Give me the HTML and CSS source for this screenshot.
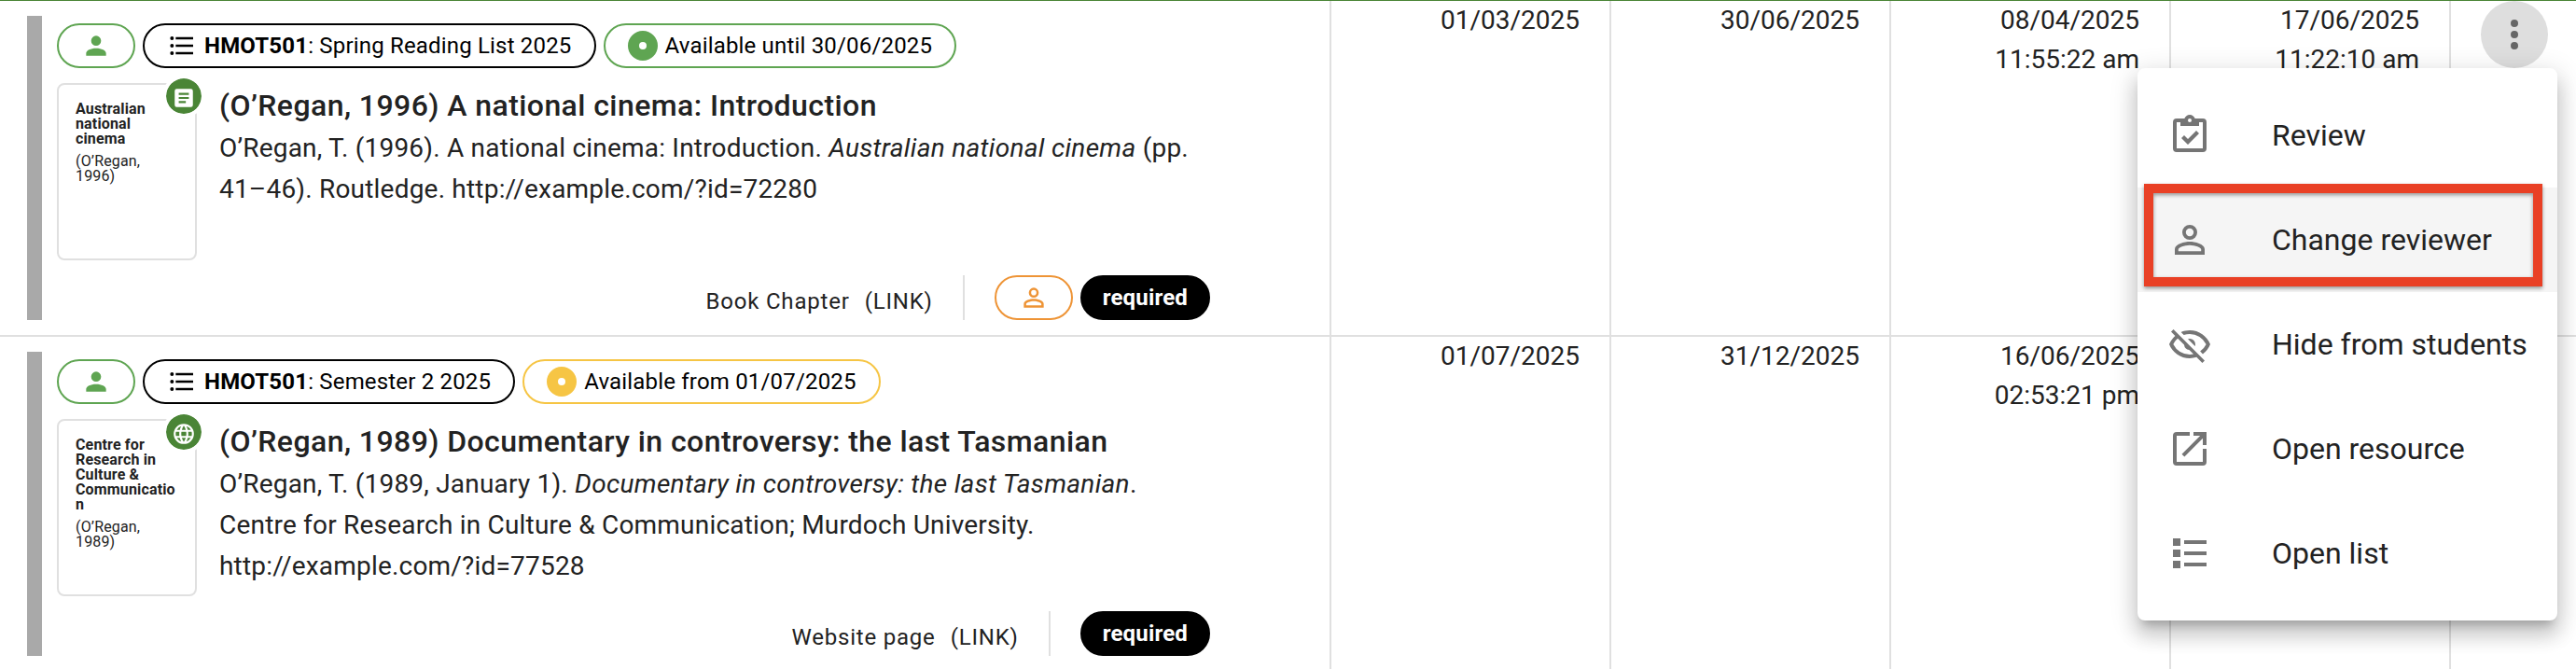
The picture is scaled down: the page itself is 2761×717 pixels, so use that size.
FILE: index.html
```html
<!DOCTYPE html>
<html lang="en">
  <head>
    <meta charset="UTF-8" />
    <meta name="viewport" content="width=device-width, initial-scale=1.0" />
    <title>Reading list items</title>
    <link rel="stylesheet" href="styles.css">
  </head>

  <body>
    <div class="table">
      <div class="row">
        <div class="cell item">
          <div class="item-bar"></div>
          <div class="item-body">
            <div class="chips">
              <span class="chip chip-green">
                <svg class="icon" viewBox="0 0 24 24"><path d="M12 4a4 4 0 1 1 0 8 4 4 0 0 1 0-8m0 10c4.420 0 8 1.790 8 4v2H4v-2c0-2.210 3.580-4 8-4" /></svg>
              </span>
              <span class="chip chip-black">
                <svg class="icon" viewBox="0 0 24 24"><path d="M7 5h14v2H7V5m0 8v-2h14v2H7M4 4.500a1.500 1.500 0 1 1 0 3 1.500 1.500 0 0 1 0-3m0 6a1.500 1.500 0 1 1 0 3 1.500 1.500 0 0 1 0-3M7 19v-2h14v2H7m-3-2.500a1.500 1.500 0 1 1 0 3 1.500 1.500 0 0 1 0-3" /></svg>
                <span><b>HMOT501</b>: Spring Reading List 2025</span>
              </span>
              <span class="chip chip-green">
                <span class="dot"></span>
                <span class="chip-text">Available until 30/06/2025</span>
              </span>
            </div>
            <div class="resource">
              <div class="cover">
                <div class="cover-title">Australian national cinema</div>
                <div class="cover-author">(O’Regan, 1996)</div>
                <div class="cover-badge">
                  <svg viewBox="0 0 24 24"><path d="M5 3h14a2 2 0 0 1 2 2v14a2 2 0 0 1-2 2H5a2 2 0 0 1-2-2V5a2 2 0 0 1 2-2m2 4v2h10V7H7m0 4v2h10v-2H7m0 4v2h7v-2H7" /></svg>
                </div>
              </div>
              <div class="details">
                <div class="title">(O’Regan, 1996) A national cinema: Introduction</div>
                <div class="citation">O’Regan, T. (1996). A national cinema: Introduction. <i>Australian national cinema</i> (pp. 41–46). Routledge. http://example.com/?id=72280</div>
              </div>
            </div>
            <div class="item-footer">
              <span class="type">Book Chapter</span>
              <span class="type">(LINK)</span>
              <span class="divider"></span>
              <span class="chip chip-orange">
                <svg class="icon" viewBox="0 0 24 24"><path d="M12 4a4 4 0 1 1 0 8 4 4 0 0 1 0-8m0 1.900a2.100 2.100 0 1 0 0 4.200 2.100 2.100 0 0 0 0-4.200m0 7.100c2.670 0 8 1.330 8 4v3H4v-3c0-2.670 5.330-4 8-4m0 1.900c-2.970 0-6.100 1.460-6.100 2.100v1.100h12.200V17c0-.640-3.130-2.100-6.100-2.100" /></svg>
              </span>
              <span class="chip chip-required">required</span>
            </div>
          </div>
        </div>
        <div class="cell date">01/03/2025</div>
        <div class="cell date">30/06/2025</div>
        <div class="cell date">08/04/2025<br>11:55:22 am</div>
        <div class="cell date">17/06/2025<br>11:22:10 am</div>
        <div class="cell actions">
          <button class="more-button">
            <svg viewBox="0 0 24 24"><path d="M12 16a2 2 0 1 1 0 4 2 2 0 0 1 0-4m0-6a2 2 0 1 1 0 4 2 2 0 0 1 0-4m0-6a2 2 0 1 1 0 4 2 2 0 0 1 0-4" /></svg>
          </button>
          <div class="menu">
            <div class="menu-item">
              <svg viewBox="0 0 24 24"><path d="M19 3h-4.180C14.400 1.840 13.300 1 12 1s-2.400.840-2.820 2H5a2 2 0 0 0-2 2v14a2 2 0 0 0 2 2h14a2 2 0 0 0 2-2V5a2 2 0 0 0-2-2m-7 0a1 1 0 1 1 0 2 1 1 0 0 1 0-2M7 7h10V5h2v14H5V5h2v2m.500 6.500L9 12l2 2 4.500-4.500L17 11l-6 6-3.500-3.500" /></svg>
              <span>Review</span>
            </div>
            <div class="menu-item active">
              <svg viewBox="0 0 24 24"><path d="M12 4a4 4 0 1 1 0 8 4 4 0 0 1 0-8m0 1.900a2.100 2.100 0 1 0 0 4.200 2.100 2.100 0 0 0 0-4.200m0 7.100c2.670 0 8 1.330 8 4v3H4v-3c0-2.670 5.330-4 8-4m0 1.900c-2.970 0-6.100 1.460-6.100 2.100v1.100h12.200V17c0-.640-3.130-2.100-6.100-2.100" /></svg>
              <span>Change reviewer</span>
              <div class="highlight"></div>
            </div>
            <div class="menu-item">
              <svg viewBox="0 0 24 24"><path d="M2 5.270 3.280 4 20 20.720 18.730 22l-3.080-3.080c-1.150.380-2.370.580-3.650.580-5 0-9.270-3.110-11-7.500.690-1.760 1.790-3.310 3.190-4.540L2 5.270M12 9a3 3 0 0 1 3 3 3 3 0 0 1-.170 1L11 9.170A3 3 0 0 1 12 9m0-4.500c5 0 9.270 3.110 11 7.500a11.790 11.790 0 0 1-4 5.190l-1.420-1.430A9.862 9.862 0 0 0 20.820 12 9.821 9.821 0 0 0 12 6.500c-1.090 0-2.160.180-3.160.500L7.300 5.470c1.440-.620 3.030-.970 4.700-.970M3.180 12A9.821 9.821 0 0 0 12 17.500c.690 0 1.370-.070 2-.210L11.720 15A3.064 3.064 0 0 1 9 12.280L5.600 8.870c-.990.850-1.820 1.910-2.420 3.130" /></svg>
              <span>Hide from students</span>
            </div>
            <div class="menu-item">
              <svg viewBox="0 0 24 24"><path d="M12 3v2H5v14h14v-7h2v7a2 2 0 0 1-2 2H5a2 2 0 0 1-2-2V5a2 2 0 0 1 2-2h7m2 0h7v7h-2V6.410l-9.830 9.830-1.410-1.410L17.590 5H14V3" /></svg>
              <span>Open resource</span>
            </div>
            <div class="menu-item">
              <svg viewBox="0 0 24 24"><path d="M3 4h4v4H3V4m6 1v2h12V5H9m-6 5h4v4H3v-4m6 1v2h12v-2H9m-6 5h4v4H3v-4m6 1v2h12v-2H9" /></svg>
              <span>Open list</span>
            </div>
          </div>
        </div>
      </div>

      <div class="row">
        <div class="cell item">
          <div class="item-bar"></div>
          <div class="item-body">
            <div class="chips">
              <span class="chip chip-green">
                <svg class="icon" viewBox="0 0 24 24"><path d="M12 4a4 4 0 1 1 0 8 4 4 0 0 1 0-8m0 10c4.420 0 8 1.790 8 4v2H4v-2c0-2.210 3.580-4 8-4" /></svg>
              </span>
              <span class="chip chip-black">
                <svg class="icon" viewBox="0 0 24 24"><path d="M7 5h14v2H7V5m0 8v-2h14v2H7M4 4.500a1.500 1.500 0 1 1 0 3 1.500 1.500 0 0 1 0-3m0 6a1.500 1.500 0 1 1 0 3 1.500 1.500 0 0 1 0-3M7 19v-2h14v2H7m-3-2.500a1.500 1.500 0 1 1 0 3 1.500 1.500 0 0 1 0-3" /></svg>
                <span><b>HMOT501</b>: Semester 2 2025</span>
              </span>
              <span class="chip chip-yellow">
                <span class="dot"></span>
                <span class="chip-text">Available from 01/07/2025</span>
              </span>
            </div>
            <div class="resource">
              <div class="cover">
                <div class="cover-title">Centre for Research in Culture &amp; Communication</div>
                <div class="cover-author">(O’Regan, 1989)</div>
                <div class="cover-badge">
                  <svg viewBox="0 0 24 24"><path d="M16.360 14c.080-.660.140-1.320.140-2s-.060-1.340-.140-2h3.380c.160.640.260 1.310.260 2s-.100 1.360-.260 2m-5.150 5.560c.600-1.110 1.060-2.310 1.380-3.560h2.950a8.030 8.030 0 0 1-4.330 3.560M14.340 14H9.660c-.100-.660-.160-1.320-.160-2s.060-1.350.160-2h4.680c.090.650.160 1.320.160 2s-.070 1.340-.160 2M12 19.960c-.830-1.200-1.500-2.530-1.910-3.960h3.820c-.410 1.430-1.080 2.760-1.910 3.960M8 8H5.080A7.923 7.923 0 0 1 9.400 4.440C8.800 5.550 8.350 6.750 8 8m-2.920 8H8c.350 1.250.800 2.450 1.400 3.560A8.008 8.008 0 0 1 5.080 16m-.820-2C4.100 13.360 4 12.690 4 12s.100-1.360.260-2h3.380c-.080.660-.140 1.320-.140 2s.060 1.340.140 2M12 4.030c.830 1.200 1.500 2.540 1.910 3.970h-3.820c.410-1.430 1.080-2.770 1.910-3.970M18.920 8h-2.950a15.650 15.650 0 0 0-1.380-3.560c1.840.630 3.370 1.900 4.330 3.560M12 2C6.470 2 2 6.500 2 12a10 10 0 0 0 10 10 10 10 0 0 0 10-10A10 10 0 0 0 12 2" /></svg>
                </div>
              </div>
              <div class="details">
                <div class="title">(O’Regan, 1989) Documentary in controversy: the last Tasmanian</div>
                <div class="citation">O’Regan, T. (1989, January 1). <i>Documentary in controversy: the last Tasmanian</i>. Centre for Research in Culture &amp; Communication; Murdoch University. <span class="url">http://example.com/?id=77528</span></div>
              </div>
            </div>
            <div class="item-footer">
              <span class="type">Website page</span>
              <span class="type">(LINK)</span>
              <span class="divider"></span>
              <span class="chip chip-required">required</span>
            </div>
          </div>
        </div>
        <div class="cell date">01/07/2025</div>
        <div class="cell date">31/12/2025</div>
        <div class="cell date">16/06/2025<br>02:53:21 pm</div>
        <div class="cell date"></div>
        <div class="cell actions"></div>
      </div>
    </div>
  </body>
</html>
```

FILE: styles.css
```css
* {
  box-sizing: border-box;
}

body {
  margin: 0;
  background: #fff;
  color: #222;
  font-family: Roboto, "Liberation Sans", sans-serif;
}

svg {
  display: block;
  fill: currentColor;
}

.table {
  height: 717px;
  overflow: hidden;
  border-top: 1px solid #4a8536;
}

.row {
  display: grid;
  grid-template-columns: 1427px repeat(4, 300px) 1fr;
  height: 360px;
  border-bottom: 2px solid #e0e0e0;
}

.cell {
  border-right: 2px solid #e0e0e0;
}

/* item column */
.item {
  display: flex;
  gap: 16px;
  padding: 16px 128px 16px 29px;
}

.item-bar {
  width: 16px;
  background: #a9a9a9;
}

.item-body {
  flex: 1;
  display: flex;
  flex-direction: column;
  padding-top: 8px;
}

.chips {
  display: flex;
  gap: 8px;
}

.chip {
  display: flex;
  align-items: center;
  gap: 8px;
  height: 48px;
  padding: 0 24px;
  border: 2px solid;
  border-radius: 24px;
  font-size: 24px;
  letter-spacing: 0.18px;
  white-space: nowrap;
}

.icon {
  width: 32px;
  height: 32px;
}

.chip-green {
  color: #5fa552;
}

.chip-black {
  color: #000;
}

.chip-yellow {
  color: #f6c544;
}

.chip-orange {
  color: #ee9436;
}

.chip-required {
  padding: 0 22px;
  border-color: #000;
  background: #000;
  color: #fff;
  font-weight: 700;
}

.chip-text {
  color: #000;
}

.dot {
  width: 32px;
  height: 32px;
  border: 12px solid;
  border-radius: 50%;
}

.resource {
  display: flex;
  gap: 24px;
  margin-top: 16px;
}

.cover {
  position: relative;
  width: 150px;
  height: 190px;
  padding: 18px;
  border: 2px solid #e0e0e0;
  border-radius: 8px;
  font-size: 16px;
  line-height: 16px;
  letter-spacing: 0.15px;
}

.cover-title {
  font-weight: 700;
  overflow-wrap: anywhere;
}

.cover-author {
  margin-top: 8px;
}

.cover-badge {
  position: absolute;
  top: -11px;
  right: -11px;
  display: flex;
  align-items: center;
  justify-content: center;
  width: 46px;
  height: 46px;
  padding-top: 4px;
  border: 4px solid #fff;
  border-radius: 50%;
  background: #4a8536;
  background-clip: padding-box;
  color: #fff;
}

.cover-badge svg {
  flex: none;
  width: 26px;
  height: 26px;
}

.details {
  flex: 1;
}

.title {
  font-size: 32px;
  font-weight: 500;
  line-height: 48px;
  letter-spacing: 0.42px;
}

.citation {
  font-size: 28px;
  line-height: 44px;
  letter-spacing: 0.2px;
}

.citation i {
  letter-spacing: 0.3px;
}

.url {
  white-space: nowrap;
}

.item-footer {
  display: flex;
  justify-content: flex-end;
  align-items: center;
  height: 48px;
  margin-top: auto;
}

.type {
  margin-right: 16px;
  padding-top: 8px;
  font-size: 24px;
  letter-spacing: 0.8px;
}

.divider {
  width: 2px;
  height: 48px;
  margin: 0 32px 0 16px;
  background: #e0e0e0;
}

.item-footer .chip-orange {
  margin-right: 8px;
}

/* date columns */
.date {
  padding-right: 32px;
  font-size: 28px;
  line-height: 42px;
  text-align: right;
}

/* actions column */
.actions {
  position: relative;
  padding-left: 32px;
  border-right: 0;
}

.more-button {
  display: flex;
  align-items: center;
  justify-content: center;
  width: 72px;
  height: 72px;
  padding: 0;
  border: 0;
  border-radius: 50%;
  background: #dedede;
  color: #666;
}

.more-button svg {
  width: 48px;
  height: 48px;
}

.menu {
  position: absolute;
  top: 72px;
  right: 20px;
  z-index: 1;
  width: 450px;
  padding: 16px 0;
  border-radius: 8px;
  background: #fff;
  box-shadow: 0 10px 10px -6px rgba(0, 0, 0, 0.2), 0 16px 20px 2px rgba(0, 0, 0, 0.14), 0 6px 28px 4px rgba(0, 0, 0, 0.12);
}

.menu-item {
  position: relative;
  display: flex;
  align-items: center;
  gap: 64px;
  height: 112px;
  padding: 0 32px;
  font-size: 32px;
  white-space: nowrap;
}

.menu-item svg {
  flex: none;
  width: 48px;
  height: 48px;
  color: #757575;
}

.menu-item.active {
  background: #f5f5f5;
}

.highlight {
  position: absolute;
  top: -4px;
  left: 7px;
  width: 427px;
  height: 110px;
  border: 10px solid #e94025;
  box-shadow: 0 2px 4px rgba(0, 0, 0, 0.4), inset 0 2px 4px rgba(0, 0, 0, 0.4);
}
```
